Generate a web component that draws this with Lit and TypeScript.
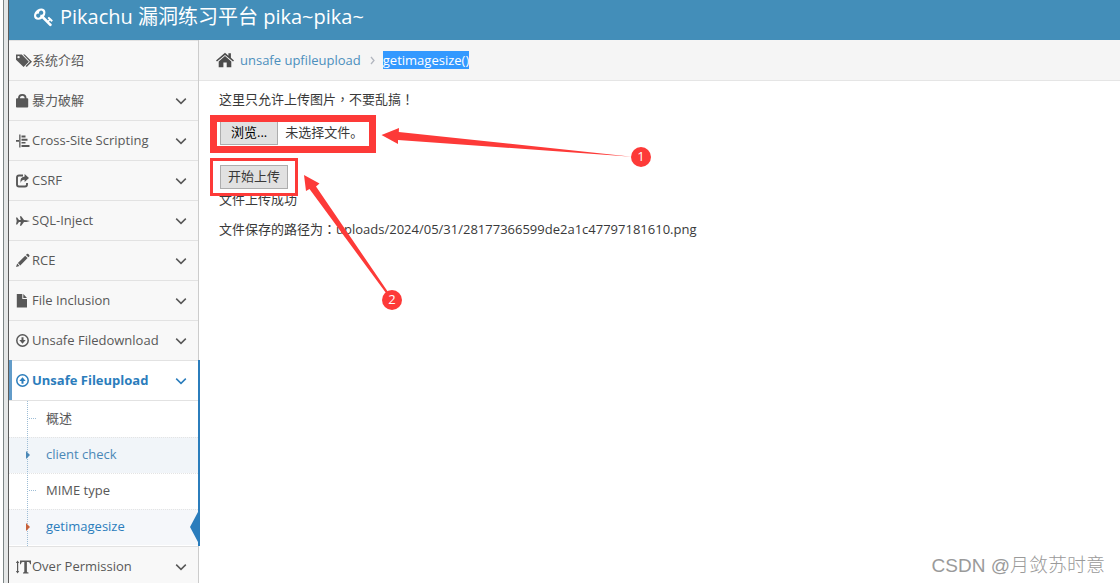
import { LitElement, html, css, svg, nothing } from "lit";
import { customElement, property, query } from "lit/decorators.js";

const icons = {
  key: { box: "0 0 1792 1792", art: svg`<path d="M832 512q0-80-56-136t-136-56-136 56-56 136q0 42 19 83-41-19-83-19-80 0-136 56t-56 136 56 136 136 56 136-56 56-136q0-42-19-83 41 19 83 19 80 0 136-56t56-136zm851 704q0 17-49 66t-66 49q-9 0-28.5-16t-36.5-33-38.5-40-24.5-26l-96 96 220 220q28 28 28 68 0 42-39 81t-81 39q-40 0-68-28l-671-671q-176 131-365 131-163 0-265.5-102.5t-102.5-265.5q0-160 95-313t248-248 313-95q163 0 265.5 102.5t102.5 265.5q0 189-131 365l355 355 96-96q-3-3-26-24.5t-40-38.5-33-36.5-16-28.5q0-17 49-66t66-49q13 0 23 10 6 6 46 44.5t82 79.5 86.5 86 73 78 28.5 41z"/>` },
  home: { box: "0 0 18 16", art: svg`<path d="M9 .8 12.400 3.700V1.200h2.500v4.600L18 8.500l-1 1.100L9 2.900 1 9.600 0 8.500z"/><path d="M9 4.100 15.300 9.400V15.200H10.700V10.600H7.400V15.200H2.700V9.400z"/>` },
  tags: { box: "0 0 16 16", art: svg`<path fill-rule="evenodd" d="M0 1.500h5.800L12.800 8.700 7.600 14 0 6.700zM2.500 2.900a1.200 1.200 0 1 0 .1 2.400 1.200 1.200 0 0 0-.1-2.400z"/><path d="M7.100 1.500h1.600L16 8.700l-5.300 5.300-1.100-1.100 4.300-4.200z"/>` },
  lock: { box: "0 0 16 16", art: svg`<path fill-rule="evenodd" d="M0 6.300Q0 5.300.8 5.300H2Q2 1 6.300 1T10.500 5.300h.9q.8 0 .8.8v7.600q0 .8-.8.8H.8q-.8 0-.8-.8zM3.800 5.300h5Q8.600 2.700 6.300 2.700T3.800 5.300z"/>` },
  align: { box: "1 0 16 16", art: svg`<path d="M0 7h4v1.800H0zM4.200 1.500h1.300v13H4.200zM6.500 2.500h4v2h-4zM6.500 5.700h6v2h-6zM6.500 9h4v1.600h-4zM6.500 12h8v2h-8z"/>` },
  share: { box: "0 0 16 16", art: svg`<path d="M7 2.500H3Q1 2.500 1 4.500v7q0 2 2 2h6q2 0 2-2V10" fill="none" stroke="currentColor" stroke-width="1.900"/><path d="M8.600.9 13 5 8.600 9V6.700Q5.500 6.600 4.700 10 3.300 4 8.600 3.400z"/>` },
  jet: { box: "0 0 16 16", art: svg`<path d="M0 4.500h1.200L3 7h1.800L3.900 3.200h1.300L8 7l2.500.2L14 8l-3.500.9L8 9l-2.800 3.800H3.900L4.800 9H3l-1.800 2.500H0L.7 8z"/>` },
  pencil: { box: "0 0 16 16", art: svg`<path d="M0 14 1.200 10.600 3.500 12.900zM1.900 9.900 9.200 2.700l2.400 2.400-7.300 7.300zM10 1.900l.8-.8q.8-.7 1.500 0l.9.9q.7.800 0 1.500l-.8.8z"/>` },
  file: { box: "0 0 16 16", art: svg`<path d="M.8 1h5.500v5H11v8.500H.8zM7.300 1 11 5H7.300z"/>` },
  down: { box: "0 0 16 16", art: svg`<circle cx="6.500" cy="7.500" r="5.700" fill="none" stroke="currentColor" stroke-width="1.500"/><path d="M5.500 4.200h2V7h2.200L6.500 10.800 3.300 7h2.200z"/>` },
  up: { box: "0 0 16 16", art: svg`<circle cx="6.500" cy="7.500" r="5.700" fill="none" stroke="currentColor" stroke-width="1.500"/><path d="M5.500 10.800h2V8h2.200L6.500 4.200 3.300 8h2.200z"/>` },
  textHeight: { box: "1 0 16 16", art: svg`<path d="M2 4H.9L2.600 1.500 4.300 4H3.200v8h1.100L2.600 14.500.9 12H2zM5 1.500h11v3.700h-.9q-.3-2.200-1.700-2.200h-1.500v9.500q0 .9 1.600 1v1H8v-1q1.300-.1 1.300-1V3H7.600Q6.200 3 5.900 5.200H5z"/>` },
  chevron: { box: "0 0 12 12", art: svg`<path d="M1.200 3.600 6 8.400l4.800-4.800" fill="none" stroke="currentColor" stroke-width="1.500"/>` },
  next: { box: "0 0 8 12", art: svg`<path d="M2 3 5 6.500 2 10" fill="none" stroke="currentColor" stroke-width="1.300"/>` },
};
type IconName = keyof typeof icons;

@customElement("ui-icon")
class UiIcon extends LitElement {
  @property() name: IconName = "key";
  static styles = css`
    :host { display: inline-flex; flex: none; width: 16px; height: 16px; }
    svg { display: block; width: 100%; height: 100%; fill: currentColor; }
  `;
  render() {
    const i = icons[this.name];
    return html`<svg viewBox=${i.box} aria-hidden="true">${i.art}</svg>`;
  }
}

interface Entry { icon: IconName; label: string; leaf?: boolean; children?: { label: string; state?: string }[] }

const menu: Entry[] = [
  { icon: "tags", label: "系统介绍", leaf: true },
  { icon: "lock", label: "暴力破解" },
  { icon: "align", label: "Cross-Site Scripting" },
  { icon: "share", label: "CSRF" },
  { icon: "jet", label: "SQL-Inject" },
  { icon: "pencil", label: "RCE" },
  { icon: "file", label: "File Inclusion" },
  { icon: "down", label: "Unsafe Filedownload" },
  { icon: "up", label: "Unsafe Fileupload", children: [
    { label: "概述" },
    { label: "client check", state: "hover" },
    { label: "MIME type" },
    { label: "getimagesize", state: "current" },
  ] },
  { icon: "textHeight", label: "Over Permission" },
];

@customElement("side-menu")
class SideMenu extends LitElement {
  static styles = css`
    :host { display: block; background: #f8f8f8; border-right: 1px solid #ccc; color: #585858; }
    ul { list-style: none; margin: 0; padding: 0; }
    a { color: inherit; text-decoration: none; }
    .link { display: flex; align-items: center; box-sizing: border-box; height: 40px; padding: 0 11px 0 7px; border-top: 1px solid #e2e2e2; white-space: nowrap; }
    .label { flex: 1; padding-bottom: 2px; }
    .arrow { width: 12px; height: 12px; }
    .open { position: relative; background: #fff; }
    .open::after { content: ""; position: absolute; top: 0; bottom: 0; right: -2px; width: 2px; background: #2b7dbc; }
    .open > .link { position: relative; color: #2b7dbc; font-weight: 700; }
    .open > .link::before { content: ""; position: absolute; top: -1px; bottom: -1px; left: 0; width: 3px; background: #629cc9; }
    .sub { position: relative; border-top: 1px solid #e2e2e2; padding-bottom: 1px; }
    .sub::before { content: ""; position: absolute; z-index: 1; top: 0; bottom: 0; left: 18px; border-left: 1px dotted #9dbdd6; }
    .sub a { position: relative; display: flex; align-items: center; box-sizing: border-box; height: 36px; padding: 0 0 3px 37px; border-top: 1px dotted #e4e4e4; }
    .sub li:first-child a { border-top-color: transparent; }
    .sub a::before { content: ""; position: absolute; left: 20px; top: 16px; width: 7px; border-top: 1px dotted #9dbdd6; }
    .sub .hover { color: #4b88b7; background: #f1f5f9; }
    .sub .current { color: #2b7dbc; background: #f5f7fa; }
    .sub .hover::before, .sub .current::before { z-index: 2; left: 17px; top: 13px; width: 0; border: 4px solid transparent; border-left: 4px solid #4b88b7; border-right: 0; }
    .sub .current::before { border-left-color: #c86139; }
    .sub .current::after { content: ""; position: absolute; right: 0; top: 2px; border: 15px solid transparent; border-right: 8px solid #2b7dbc; border-left: 0; }
  `;
  render() {
    return html`<nav><ul>${menu.map((m) => html`
      <li class=${m.children ? "open" : ""}>
        <a class="link" href="#">
          <ui-icon name=${m.icon}></ui-icon><span class="label">${m.label}</span>
          ${m.leaf ? nothing : html`<ui-icon class="arrow" name="chevron"></ui-icon>`}
        </a>
        ${m.children ? html`<ul class="sub">${m.children.map((c) => html`<li><a class=${c.state ?? ""} href="#">${c.label}</a></li>`)}</ul>` : nothing}
      </li>`)}</ul></nav>`;
  }
}

@customElement("upload-panel")
class UploadPanel extends LitElement {
  @query("#file") file!: HTMLInputElement;
  static styles = css`
    :host { display: block; padding: 8px 20px; color: #393939; }
    p { margin: 0 0 10px; line-height: 20px; }
    form { display: flex; flex-direction: column; align-items: flex-start; gap: 20px; padding-top: 2px; }
    .row { display: flex; align-items: center; gap: 7px; }
    .row label { padding-bottom: 2px; }
    .picker { position: absolute; width: 1px; height: 1px; opacity: 0; pointer-events: none; }
    button { box-sizing: border-box; height: 24px; margin: 0 0 0 1px; padding: 0 7px 2px; border: 1px solid #adadad; background: #e1e1e1; color: #393939; font: inherit; line-height: 20px; }
    .browse { padding: 0 10px 2px; color: #000; }
    .mid { font-family: "Noto Sans CJK TC", sans-serif; line-height: 1; }
  `;
  render() {
    return html`
      <p>这里只允许上传图片<span class="mid">，</span>不要乱搞<span class="mid">！</span></p>
      <form @submit=${(e: Event) => e.preventDefault()}>
        <div class="row">
          <input id="file" class="picker" type="file" tabindex="-1" aria-label="浏览" />
          <button class="browse" type="button" @click=${() => this.file.click()}>浏览...</button>
          <label for="file">未选择文件。</label>
        </div>
        <button type="submit">开始上传</button>
      </form>
      <p>文件上传成功</p>
      <p>文件保存的路径为<span class="mid">：</span>uploads/2024/05/31/28177366599de2a1c47797181610.png</p>`;
  }
}

@customElement("app-root")
class AppRoot extends LitElement {
  static styles = css`
    :host { display: flex; height: 100vh; overflow: hidden; background: #fff; font: 13px/20px "Open Sans", "Noto Sans CJK SC", sans-serif; }
    .edge { flex: none; box-sizing: border-box; width: 6px; margin-left: 3px; border-left: 1px solid #7c8586; border-right: 1px solid #5c5c5c; background: #e5e7e7; }
    .page { flex: 1; min-width: 0; display: flex; flex-direction: column; }
    header { flex: none; display: flex; align-items: center; gap: 6px; height: 40px; padding: 0 0 6px 25px; box-sizing: border-box; background: #438eb9; color: #fff; }
    h1 { margin: 0; font-size: 20px; line-height: 28px; font-weight: 400; white-space: nowrap; }
    .logo { width: 20px; height: 20px; }
    .body { flex: 1; min-height: 0; display: grid; grid-template-columns: 190px 1fr; }
    main { position: relative; min-width: 0; }
    .crumbs { display: flex; align-items: center; box-sizing: border-box; height: 41px; padding: 0 17px; background: #f5f5f5; border-bottom: 1px solid #e5e5e5; }
    .crumbs a { margin: 0 8px 0 6px; color: #4c8fbd; text-decoration: none; }
    .home { width: 18px; height: 16px; color: #4c4c4c; }
    .next { width: 8px; height: 12px; margin-right: 6px; color: #b2b6bf; }
    .selected { background: #3399ff; color: #fff; line-height: 18px; }
    .notes { position: absolute; left: 0; top: 0; width: 480px; height: 300px; pointer-events: none; fill: #fd3a38; }
    .frame { fill: none; stroke: #fd3a38; }
    .num { fill: #fff; font-size: 13px; text-anchor: middle; }
    .mark { position: absolute; right: 15px; bottom: 7px; color: #9a9a9a; font: 19px/26px "Liberation Sans", "Noto Sans CJK SC", sans-serif; font-weight: 300; }
  `;
  render() {
    return html`
      <div class="edge"></div>
      <div class="page">
        <header><ui-icon class="logo" name="key"></ui-icon><h1>Pikachu 漏洞练习平台 pika~pika~</h1></header>
        <div class="body">
          <side-menu></side-menu>
          <main>
            <nav class="crumbs">
              <ui-icon class="home" name="home"></ui-icon><a href="#">unsafe upfileupload</a>
              <ui-icon class="next" name="next"></ui-icon><span class="selected">getimagesize()</span>
            </nav>
            <upload-panel></upload-panel>
            <svg class="notes" viewBox="199 40 480 300">
              <rect class="frame" x="213.500" y="118.500" width="159" height="31" stroke-width="7"/>
              <rect class="frame" x="211.500" y="159.500" width="85" height="35" stroke-width="3"/>
              <path d="M381.500 135 399 128 398.800 132 632 156.700 398 140 398 144z"/>
              <path d="M304 175 319.500 183.500 316 186.500 388 292 386 293 309.500 189 306 191z"/>
              <circle cx="641" cy="157" r="10"/><circle cx="392" cy="300" r="10"/>
              <text class="num" x="641" y="161">1</text><text class="num" x="392" y="304">2</text>
            </svg>
            <div class="mark">CSDN @月敛苏时意</div>
          </main>
        </div>
      </div>`;
  }
}
